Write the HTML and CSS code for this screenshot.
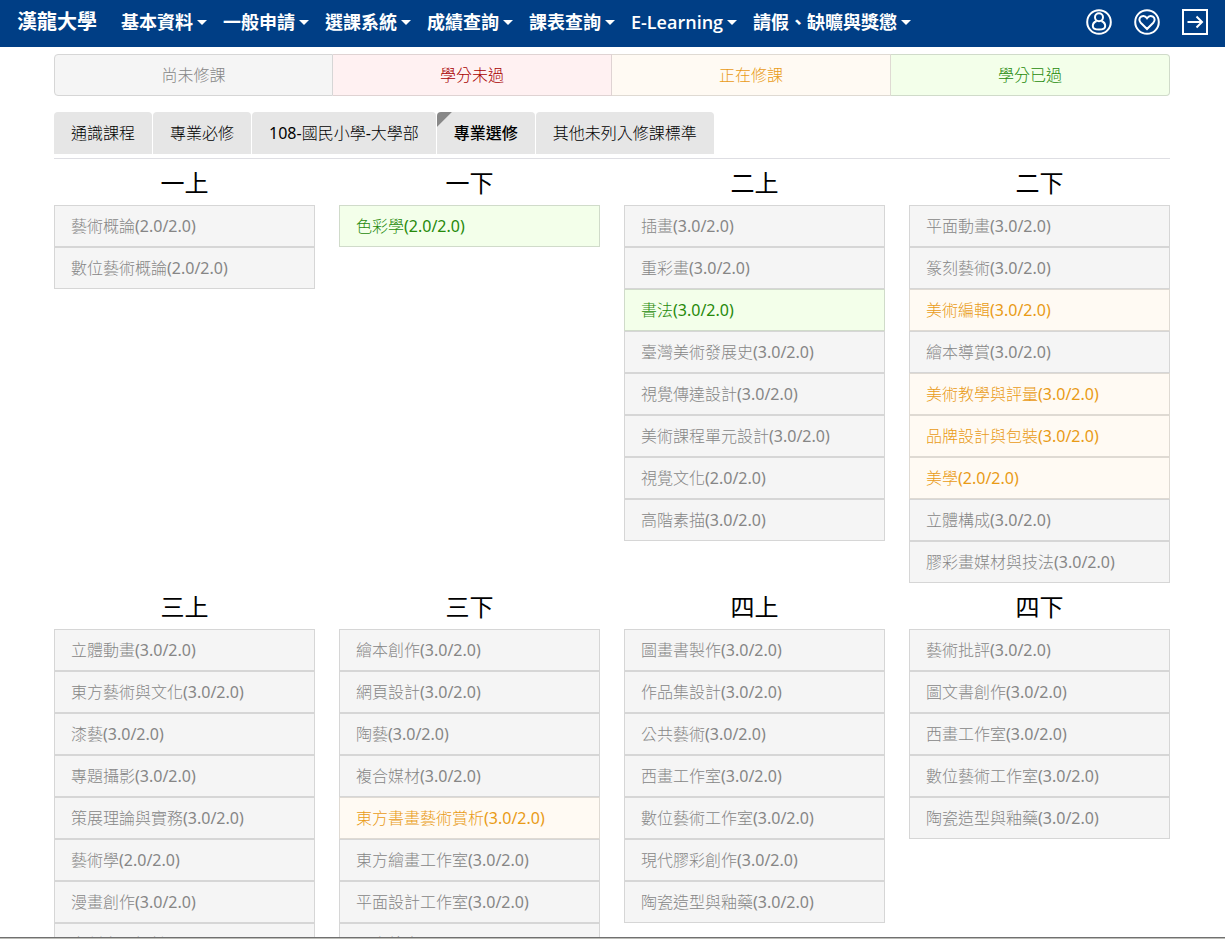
FILE: index.html
```
<!DOCTYPE html>
<html lang="zh-Hant">
<head>
<meta charset="utf-8">
<meta name="viewport" content="width=device-width, initial-scale=1">
<title>漢龍大學</title>
<link rel="stylesheet" href="styles.css">
</head>
<body>
<header class="navbar">
  <a class="brand" href="#">漢龍大學</a>
  <nav class="menu">
    <button class="menu-item" type="button">基本資料</button>
    <button class="menu-item" type="button">一般申請</button>
    <button class="menu-item" type="button">選課系統</button>
    <button class="menu-item" type="button">成績查詢</button>
    <button class="menu-item" type="button">課表查詢</button>
    <button class="menu-item" type="button">E-Learning</button>
    <button class="menu-item" type="button">請假、缺曠與獎懲</button>
  </nav>
  <div class="tools">
    <button class="tool" type="button" aria-label="個人">
      <svg viewBox="0 0 26 26"><circle cx="13" cy="13" r="11.8"/><circle cx="13" cy="8.2" r="4"/><path d="M10.600 12C8 13 6.800 14.900 6.800 17C6.800 19.900 9.300 20.600 13 20.600S19.200 19.900 19.200 17C19.200 14.900 18 13 15.400 12"/></svg>
    </button>
    <button class="tool" type="button" aria-label="收藏">
      <svg viewBox="0 0 26 26"><circle cx="13" cy="13" r="11.8"/><path d="M13 20L6.700 13.700C4.700 11.600 5.100 8.900 7.100 7.700C9.100 6.500 11.500 7.100 13 9.300C14.500 7.100 16.900 6.500 18.900 7.700C20.900 8.900 21.300 11.600 19.300 13.700Z"/></svg>
    </button>
    <button class="tool" type="button" aria-label="登出">
      <svg viewBox="0 0 26 26"><rect x="1" y="1" width="24" height="24"/><path d="M5.500 13H20M14.500 7.500L20 13L14.500 18.500"/></svg>
    </button>
  </div>
</header>
<main class="page">
  <ul class="legend">
    <li class="todo">尚未修課</li>
    <li class="failed">學分未過</li>
    <li class="taking">正在修課</li>
    <li class="passed">學分已過</li>
  </ul>
  <div class="tabs" role="tablist">
    <button class="tab" type="button" role="tab">通識課程</button>
    <button class="tab" type="button" role="tab">專業必修</button>
    <button class="tab" type="button" role="tab">108-國民小學-大學部</button>
    <button class="tab active" type="button" role="tab" aria-selected="true">專業選修</button>
    <button class="tab" type="button" role="tab">其他未列入修課標準</button>
  </div>
  <div class="terms">
    <section class="term">
      <h2>一上</h2>
      <ul>
        <li class="todo">藝術概論(2.0/2.0)</li>
        <li class="todo">數位藝術概論(2.0/2.0)</li>
      </ul>
    </section>
    <section class="term">
      <h2>一下</h2>
      <ul>
        <li class="passed">色彩學(2.0/2.0)</li>
      </ul>
    </section>
    <section class="term">
      <h2>二上</h2>
      <ul>
        <li class="todo">插畫(3.0/2.0)</li>
        <li class="todo">重彩畫(3.0/2.0)</li>
        <li class="passed">書法(3.0/2.0)</li>
        <li class="todo">臺灣美術發展史(3.0/2.0)</li>
        <li class="todo">視覺傳達設計(3.0/2.0)</li>
        <li class="todo">美術課程單元設計(3.0/2.0)</li>
        <li class="todo">視覺文化(2.0/2.0)</li>
        <li class="todo">高階素描(3.0/2.0)</li>
      </ul>
    </section>
    <section class="term">
      <h2>二下</h2>
      <ul>
        <li class="todo">平面動畫(3.0/2.0)</li>
        <li class="todo">篆刻藝術(3.0/2.0)</li>
        <li class="taking">美術編輯(3.0/2.0)</li>
        <li class="todo">繪本導賞(3.0/2.0)</li>
        <li class="taking">美術教學與評量(3.0/2.0)</li>
        <li class="taking">品牌設計與包裝(3.0/2.0)</li>
        <li class="taking">美學(2.0/2.0)</li>
        <li class="todo">立體構成(3.0/2.0)</li>
        <li class="todo">膠彩畫媒材與技法(3.0/2.0)</li>
      </ul>
    </section>
    <section class="term">
      <h2>三上</h2>
      <ul>
        <li class="todo">立體動畫(3.0/2.0)</li>
        <li class="todo">東方藝術與文化(3.0/2.0)</li>
        <li class="todo">漆藝(3.0/2.0)</li>
        <li class="todo">專題攝影(3.0/2.0)</li>
        <li class="todo">策展理論與實務(3.0/2.0)</li>
        <li class="todo">藝術學(2.0/2.0)</li>
        <li class="todo">漫畫創作(3.0/2.0)</li>
        <li class="todo">文創商品設計(3.0/2.0)</li>
      </ul>
    </section>
    <section class="term">
      <h2>三下</h2>
      <ul>
        <li class="todo">繪本創作(3.0/2.0)</li>
        <li class="todo">網頁設計(3.0/2.0)</li>
        <li class="todo">陶藝(3.0/2.0)</li>
        <li class="todo">複合媒材(3.0/2.0)</li>
        <li class="taking">東方書畫藝術賞析(3.0/2.0)</li>
        <li class="todo">東方繪畫工作室(3.0/2.0)</li>
        <li class="todo">平面設計工作室(3.0/2.0)</li>
        <li class="todo">西方繪畫(3.0/2.0)</li>
      </ul>
    </section>
    <section class="term">
      <h2>四上</h2>
      <ul>
        <li class="todo">圖畫書製作(3.0/2.0)</li>
        <li class="todo">作品集設計(3.0/2.0)</li>
        <li class="todo">公共藝術(3.0/2.0)</li>
        <li class="todo">西畫工作室(3.0/2.0)</li>
        <li class="todo">數位藝術工作室(3.0/2.0)</li>
        <li class="todo">現代膠彩創作(3.0/2.0)</li>
        <li class="todo">陶瓷造型與釉藥(3.0/2.0)</li>
      </ul>
    </section>
    <section class="term">
      <h2>四下</h2>
      <ul>
        <li class="todo">藝術批評(3.0/2.0)</li>
        <li class="todo">圖文書創作(3.0/2.0)</li>
        <li class="todo">西畫工作室(3.0/2.0)</li>
        <li class="todo">數位藝術工作室(3.0/2.0)</li>
        <li class="todo">陶瓷造型與釉藥(3.0/2.0)</li>
      </ul>
    </section>
  </div>
</main>
<footer class="edge"></footer>
</body>
</html>
```

FILE: styles.css
```
* {
  box-sizing: border-box;
}

body {
  margin: 0;
  height: 100vh;
  display: flex;
  flex-direction: column;
  overflow: hidden;
  background: #fff;
  color: #000;
  font: 400 16px/24px "Noto Sans", "Noto Sans CJK TC Light", "Noto Sans CJK TC", sans-serif;
}

ul {
  margin: 0;
  padding: 0;
  list-style: none;
}

button {
  border: 0;
  padding: 0;
  background: none;
  color: inherit;
  font: inherit;
  white-space: nowrap;
}

.navbar {
  flex: none;
  display: flex;
  align-items: center;
  height: 47px;
  padding: 0 17px 3px;
  background: #003e85;
  color: #fff;
  font-family: "Open Sans", "Noto Sans CJK TC", sans-serif;
  font-weight: 600;
}

.brand {
  margin-right: 24px;
  color: inherit;
  font-size: 20px;
  text-decoration: none;
  white-space: nowrap;
}

.menu {
  display: flex;
  gap: 16px;
  font-size: 18px;
}

.menu-item {
  display: flex;
  align-items: center;
  gap: 4px;
}

.menu-item::after {
  content: "";
  border: 5px solid transparent;
  border-top-color: currentColor;
  border-bottom: 0;
}

.tools {
  display: flex;
  gap: 22px;
  margin-left: auto;
}

.tool svg {
  display: block;
  width: 26px;
  height: 26px;
  fill: none;
  stroke: #fff;
  stroke-width: 2;
}

.page {
  flex: 1;
  min-height: 0;
  overflow: hidden;
  width: 100%;
  max-width: 1141px;
  margin: 0 auto;
  padding: 7px 13px 0 12px;
}

.legend {
  display: grid;
  grid-template-columns: repeat(4, 1fr);
  margin-bottom: 16px;
}

.legend li {
  padding: 8px 0;
  border-width: 1px 1px 1px 0;
  border-style: solid;
  text-align: center;
}

.legend li:first-child {
  border-left-width: 1px;
  border-radius: 4px 0 0 4px;
}

.legend li:last-child {
  border-radius: 0 4px 4px 0;
}

.page .todo {
  background: #f5f5f5;
  border-color: #d6d6d6;
  color: #868686;
}

.page .failed {
  background: #fff1f2;
  border-color: #dfd3d3;
  color: #a80000;
}

.page .taking {
  background: #fffaf3;
  border-color: #dfdad3;
  color: #e99b16;
}

.page .passed {
  background: #f3ffea;
  border-color: #d0dbca;
  color: #268a0b;
}

.tabs {
  display: flex;
  gap: 1px;
  padding-bottom: 4px;
  border-bottom: 1px solid #dedee3;
}

.tab {
  height: 42px;
  padding: 0 17px;
  background: #e6e6e6;
  border-radius: 4px 4px 0 0;
}

.tab.active {
  background: linear-gradient(135deg, #888 10px, #e6e6e6 11px);
  font-family: "Noto Sans", "Noto Sans CJK TC", sans-serif;
  font-weight: 500;
}

.terms {
  display: grid;
  grid-template-columns: repeat(4, 1fr);
  column-gap: 24px;
}

.term h2 {
  margin: 0;
  padding: 9px 0 7px;
  font-family: "Noto Sans", "Noto Sans CJK TC", sans-serif;
  font-size: 24px;
  font-weight: 400;
  line-height: 30px;
  text-align: center;
}

.term li {
  padding: 8px 16px;
  border-width: 1px;
  border-style: solid;
}

.edge {
  flex: none;
  height: 2px;
  background: #bdbdb8;
  border-top: 1px solid #707070;
}
```
